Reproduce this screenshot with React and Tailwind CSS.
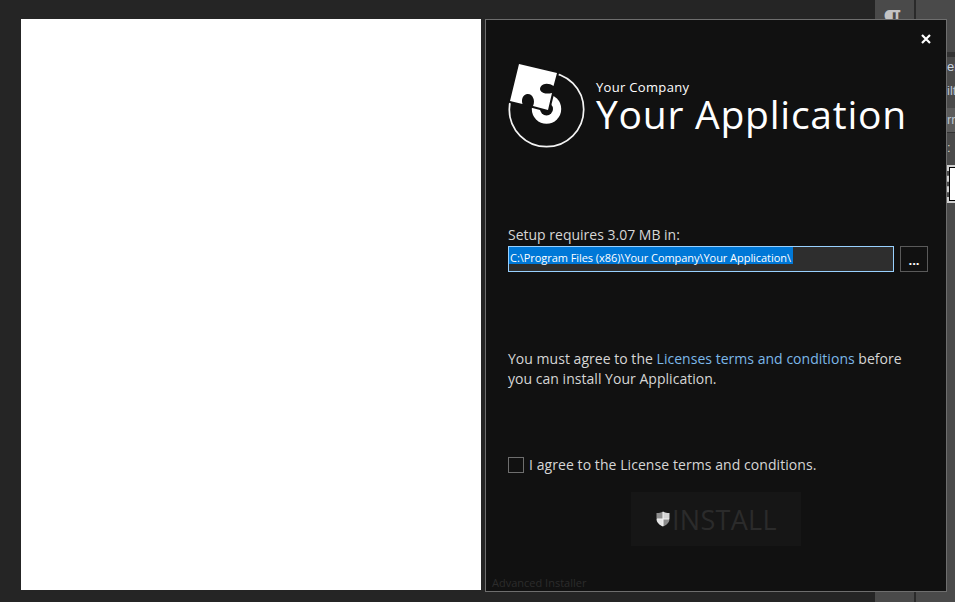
import React from "react";

const font = { fontFamily: '"Open Sans", "Noto Sans", sans-serif' };
const sans = { fontFamily: '"Liberation Sans", sans-serif' };

function Logo() {
  return (
    <svg width="85" height="90" viewBox="0 0 85 90" className="shrink-0">
      <circle cx="41.5" cy="49.5" r="37.2" fill="none" stroke="#f4f4f4" strokeWidth="1.7" />
      <circle cx="41.5" cy="49" r="14.7" fill="#fff" />
      <circle cx="41.5" cy="49" r="6.5" fill="#111" />
      <path d="M14 4 L52 13 L48.5 27 L44 26 L38 24 L35 29 L40 34 L47.5 32 L43 50 L28 46 L17 44 L5 41 Z" fill="#111" stroke="#111" strokeWidth="4" strokeLinejoin="round" />
      <path d="M14 4 L52 13 L48.5 26 C44 23 38 23 35.5 27 C33.5 31 38 35 47 33 L43 50 L28 46 C31 40 27 33 22 34 C18 35 16 39 17.5 44 L5 41 Z" fill="#fff" />
    </svg>
  );
}

function Shield() {
  return (
    <svg width="14" height="16" viewBox="0 0 14 16" className="shrink-0">
      <path d="M7 0.5 L7 8 L0.5 8 L0.5 2 C3 2 5 1.5 7 0.5 Z" fill="#8e8e8e" />
      <path d="M7 8 L13.5 8 C13.5 11.5 10.5 14 7 15.5 Z" fill="#8a8a8a" />
      <path d="M7 0.5 C9 1.5 11 2 13.5 2 L13.5 8 L7 8 Z" fill="#d4d4d4" />
      <path d="M0.5 8 L7 8 L7 15.5 C3.5 14 0.5 11.5 0.5 8 Z" fill="#e4e4e4" />
      <path d="M7 1 V15 M1 8 H13" stroke="#f4f4f4" strokeWidth="1" />
    </svg>
  );
}

function Backdrop() {
  return (
    <div className="absolute inset-0 bg-[#252525]">
      <div className="absolute left-[875px] top-0 bottom-0 right-0 flex bg-[#4a4a4a]">
        <div className="w-[39px] flex justify-center">
          <span className="mt-[5px] mr-[4px] text-[32px] leading-[32px] font-bold text-[#c4c4c4]" style={sans}>¶</span>
        </div>
        <div className="w-[2px] bg-[#2a2a2a]" />
      </div>
      <div className="absolute left-[947px] top-[52px] right-0 h-[5px] bg-[#333333]" />
      <div className="absolute left-[947px] top-[60px] text-[13px] leading-[14px] text-[#c8d4e0]" style={sans}>er</div>
      <div className="absolute left-[947px] top-[84px] text-[13px] leading-[14px] text-[#b8c4d0]" style={sans}>ilt</div>
      <div className="absolute left-[947px] top-[108px] right-0 h-[25px] bg-[#5c5c5c] border-b border-[#333333] text-[13px] leading-[24px] text-[#b8c4d0]" style={sans}>rr</div>
      <div className="absolute left-[947px] top-[141px] text-[13px] leading-[14px] text-[#d0d0c0]" style={sans}>:</div>
      <div className="absolute left-[947px] top-[165px] right-0 h-[38px] border-l-2 border-y-2 border-dashed border-[#d0d0d0]" />
      <div className="absolute left-[949px] top-[167px] right-0 h-[34px] bg-white border-l border-y border-black" />
    </div>
  );
}

export default function App() {
  return (
    <div className="relative w-[955px] h-[602px] overflow-hidden" style={font}>
      <Backdrop />
      <div className="relative flex pl-[21px] pt-[19px] gap-[4px]">
        <div className="w-[460px] h-[571px] bg-white" />
        <div className="relative w-[462px] h-[573px] bg-[#111111] border border-[#6e6e6e] flex flex-col">
          <div className="absolute left-[435px] top-[14px] text-white">
            <svg width="10" height="10" viewBox="0 0 10 10"><path d="M1 1 L9 9 M9 1 L1 9" stroke="#fff" strokeWidth="2.2" /></svg>
          </div>
          <div className="flex items-start pl-[19px] pt-[40px]">
            <Logo />
            <div className="ml-[6px] pt-[20px] flex flex-col text-white">
              <div className="text-[13px] leading-[15px] tracking-[0.32px]">Your Company</div>
              <div className="text-[39px] leading-[40px] mt-[-1px] tracking-[0.76px] whitespace-nowrap">Your Application</div>
            </div>
          </div>
          <div className="pl-[22px] mt-[76px] text-[14px] leading-[18px] text-[#d6d6d6]">Setup requires 3.07 MB in:</div>
          <div className="flex pl-[22px] mt-[2px] gap-[6px]">
            <div className="w-[386px] h-[26px] bg-[#2e2e2e] border border-[#99d1ff]">
              <div className="w-[284px] h-[17px] bg-[#0078d7] text-white text-[11px] leading-[22px] pl-[1px] tracking-[-0.05px] whitespace-nowrap">C:\Program Files (x86)\Your Company\Your Application\</div>
            </div>
            <div className="w-[28px] h-[26px] border border-[#5a5a5a] text-white text-[13px] leading-[26px] text-center font-bold">...</div>
          </div>
          <div className="pl-[22px] mt-[77px] text-[14px] leading-[20px] tracking-[0.03px] text-[#d6d6d6] whitespace-nowrap">
            <div>You must agree to the <span className="text-[#7cb8e8]">Licenses terms and conditions</span> before</div>
            <div>you can install Your Application.</div>
          </div>
          <div className="flex items-center pl-[22px] mt-[66px]">
            <div className="w-[16px] h-[16px] border border-[#6e6e6e]" />
            <span className="ml-[5px] text-[14px] leading-[20px] tracking-[0.07px] text-[#d6d6d6] whitespace-nowrap">I agree to the License terms and conditions.</span>
          </div>
          <div className="ml-[145px] mt-[17px] w-[170px] h-[54px] bg-[#161616] flex items-center pl-[25px]">
            <Shield />
            <span className="ml-[2px] mt-[2px] text-[27px] leading-[52px] tracking-[0.3px] text-[#2b2b2b]">INSTALL</span>
          </div>
          <div className="pl-[6px] mt-[auto] mb-[1px] text-[11px] leading-[15px] text-[#2c2c2c]">Advanced Installer</div>
        </div>
      </div>
    </div>
  );
}
